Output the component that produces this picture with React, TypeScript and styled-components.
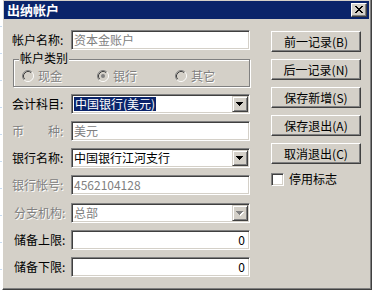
import styled, { createGlobalStyle } from "styled-components"

const colors = {
    face: "#d4d0c8",
    shadow: "#808080",
    darkShadow: "#404040",
    light: "#ffffff",
    navy: "#0a246a",
    text: "#000000",
    grayText: "#808080",
}

const GlobalStyle = createGlobalStyle`
html, body {
  margin: 0;
  padding: 0;
}
body {
  width: 372px;
  height: 290px;
  overflow: hidden;
  background: repeating-linear-gradient(to bottom, #ffffff 0 26px, #c9dcf0 26px 27px);
  font-family: "Noto Sans CJK SC", "Liberation Sans", sans-serif;
  font-size: 12px;
}
`

const Window = styled.div`
box-sizing: border-box;
width: 370px;
height: 291px;
margin: -1px 0 0 2px;
padding: 1px 2px 2px 1px;
background: ${colors.face};
border: 1px solid;
border-color: ${colors.light} ${colors.darkShadow} ${colors.darkShadow} ${colors.light};
box-shadow: inset -1px -1px ${colors.shadow};
display: flex;
flex-direction: column;
`

const TitleBar = styled.div`
height: 18px;
background: ${colors.navy};
display: flex;
align-items: center;
justify-content: space-between;
padding: 0 2px 0 3px;
`

const Title = styled.span`
color: #fff;
font-weight: bold;
font-size: 13px;
line-height: 14px;
`

const CloseButton = styled.div`
box-sizing: border-box;
width: 16px;
height: 14px;
background: ${colors.face};
border: 1px solid;
border-color: ${colors.light} ${colors.darkShadow} ${colors.darkShadow} ${colors.light};
box-shadow: inset -1px -1px ${colors.shadow};
display: flex;
align-items: center;
justify-content: center;
padding: 0 1px 1px 0;
`

const Content = styled.div`
display: flex;
padding: 11px 0 0 8px;
`

const LeftColumn = styled.div`
display: flex;
flex-direction: column;
width: 238px;
`

const Row = styled.div<{ $mt?: number }>`
display: grid;
grid-template-columns: 59px 179px;
align-items: center;
height: 20px;
margin-top: ${(p) => p.$mt ?? 7}px;
`

const Label = styled.span<{ $disabled?: boolean; $indent?: number }>`
color: ${(p) => (p.$disabled ? colors.grayText : colors.text)};
text-shadow: ${(p) => (p.$disabled ? `1px 1px ${colors.light}` : "none")};
padding-left: ${(p) => p.$indent ?? 0}px;
white-space: nowrap;
line-height: 16px;
`

const Field = styled.div<{ $gray?: boolean; $right?: boolean }>`
box-sizing: border-box;
height: 20px;
width: 179px;
background: #fff;
border: 1px solid;
border-color: ${colors.shadow} ${colors.light} ${colors.light} ${colors.shadow};
box-shadow: inset 1px 1px ${colors.darkShadow}, inset -1px -1px ${colors.face};
display: flex;
align-items: center;
justify-content: ${(p) => (p.$right ? "flex-end" : "space-between")};
padding: 0 ${(p) => (p.$right ? 4 : 1)}px 0 2px;
color: ${(p) => (p.$gray ? colors.grayText : colors.text)};
line-height: 16px;
white-space: nowrap;
`

const Selected = styled.span`
background: ${colors.navy};
color: #fff;
padding: 0 1px;
line-height: 14px;
`

const DropButton = styled.div<{ $disabled?: boolean }>`
box-sizing: border-box;
width: 16px;
height: 16px;
flex: none;
background: ${colors.face};
border: 1px solid;
border-color: ${colors.face} ${colors.darkShadow} ${colors.darkShadow} ${colors.face};
box-shadow: inset 1px 1px ${colors.light}, inset -1px -1px ${colors.shadow};
display: flex;
align-items: center;
justify-content: center;
`

const GroupBox = styled.div`
position: relative;
box-sizing: border-box;
width: 237px;
height: 28px;
margin: 9px 0 0 1px;
border: 1px solid ${colors.shadow};
box-shadow: inset 1px 1px ${colors.light}, 1px 1px ${colors.light};
display: grid;
grid-template-columns: 75px 78px 1fr;
align-items: center;
padding: 5px 0 0 8px;
`

const Legend = styled.span`
position: absolute;
top: -8px;
left: 5px;
padding: 0 1px;
background: ${colors.face};
color: ${colors.text};
line-height: 12px;
`

const RadioItem = styled.div`
display: flex;
align-items: center;
gap: 4px;
color: ${colors.grayText};
text-shadow: 1px 1px ${colors.light};
line-height: 12px;
`

const RightColumn = styled.div`
display: flex;
flex-direction: column;
gap: 7px;
margin-left: 21px;
padding-top: 1px;
`

const Button = styled.div`
box-sizing: border-box;
width: 90px;
height: 21px;
background: ${colors.face};
border: 1px solid;
border-color: ${colors.light} ${colors.darkShadow} ${colors.darkShadow} ${colors.light};
box-shadow: inset -1px -1px ${colors.shadow};
display: flex;
align-items: center;
justify-content: center;
color: ${colors.text};
line-height: 14px;
white-space: nowrap;
`

const CheckRow = styled.div`
display: flex;
align-items: center;
gap: 5px;
margin-top: 1px;
line-height: 14px;
`

const CheckBox = styled.div`
box-sizing: border-box;
width: 13px;
height: 13px;
background: #fff;
border: 1px solid;
border-color: ${colors.shadow} ${colors.light} ${colors.light} ${colors.shadow};
box-shadow: inset 1px 1px ${colors.darkShadow}, inset -1px -1px ${colors.face};
`

const CloseGlyph = () => {
    const rows = ["xx....xx", ".xx..xx.", "..xxxx..", "...xx...", "..xxxx..", ".xx..xx.", "xx....xx"]
    return (
        <svg width="8" height="7" viewBox="0 0 8 7" shapeRendering="crispEdges">
            {rows.flatMap((r, y) =>
                r.split("").map((c, x) => (c === "x" ? <rect key={`${x}-${y}`} x={x} y={y} width="1" height="1" fill="#000" /> : null))
            )}
        </svg>
    )
}

const Arrow = ({ disabled }: { disabled?: boolean }) => {
    const d = "M0 0h7v1h-1v1h-1v1h-1v1h-1v-1h-1v-1h-1v-1h-1z"
    return (
        <svg width="8" height="5" viewBox="0 0 8 5" shapeRendering="crispEdges">
            {disabled && <path d={d} fill="#fff" transform="translate(1 1)" />}
            <path d={d} fill={disabled ? colors.grayText : "#000"} />
        </svg>
    )
}

const Radio = ({ checked }: { checked?: boolean }) => (
    <svg width="12" height="12" viewBox="0 0 12 12">
        <circle cx="6" cy="6" r="4.5" fill={colors.face} />
        <path d="M2.11 9.89 A5.5 5.5 0 0 1 9.89 2.11" stroke={colors.shadow} fill="none" />
        <path d="M9.89 2.11 A5.5 5.5 0 0 1 2.11 9.89" stroke={colors.light} fill="none" />
        <path d="M2.82 9.18 A4.5 4.5 0 0 1 9.18 2.82" stroke={colors.darkShadow} fill="none" />
        <path d="M9.18 2.82 A4.5 4.5 0 0 1 2.82 9.18" stroke={colors.face} fill="none" />
        {checked && <circle cx="6" cy="6" r="2" fill={colors.grayText} />}
    </svg>
)

export default function App() {
    return (
        <>
            <GlobalStyle />
            <Window>
                <TitleBar>
                    <Title>出纳帐户</Title>
                    <CloseButton>
                        <CloseGlyph />
                    </CloseButton>
                </TitleBar>
                <Content>
                    <LeftColumn>
                        <Row $mt={0}>
                            <Label>帐户名称:</Label>
                            <Field $gray>资本金账户</Field>
                        </Row>
                        <GroupBox>
                            <Legend>帐户类别</Legend>
                            <RadioItem>
                                <Radio />
                                现金
                            </RadioItem>
                            <RadioItem>
                                <Radio checked />
                                银行
                            </RadioItem>
                            <RadioItem>
                                <Radio />
                                其它
                            </RadioItem>
                        </GroupBox>
                        <Row>
                            <Label>会计科目:</Label>
                            <Field>
                                <Selected>中国银行(美元)</Selected>
                                <DropButton>
                                    <Arrow />
                                </DropButton>
                            </Field>
                        </Row>
                        <Row>
                            <Label $disabled>币{"\u3000\u3000"}种:</Label>
                            <Field $gray>美元</Field>
                        </Row>
                        <Row>
                            <Label>银行名称:</Label>
                            <Field>
                                <span>中国银行江河支行</span>
                                <DropButton>
                                    <Arrow />
                                </DropButton>
                            </Field>
                        </Row>
                        <Row>
                            <Label $disabled>银行帐号:</Label>
                            <Field $gray>4562104128</Field>
                        </Row>
                        <Row $mt={8}>
                            <Label $disabled $indent={2}>分支机构:</Label>
                            <Field $gray>
                                <span>总部</span>
                                <DropButton $disabled>
                                    <Arrow disabled />
                                </DropButton>
                            </Field>
                        </Row>
                        <Row>
                            <Label $indent={2}>储备上限:</Label>
                            <Field $right>0</Field>
                        </Row>
                        <Row>
                            <Label $indent={2}>储备下限:</Label>
                            <Field $right>0</Field>
                        </Row>
                    </LeftColumn>
                    <RightColumn>
                        <Button>前一记录(B)</Button>
                        <Button>后一记录(N)</Button>
                        <Button>保存新增(S)</Button>
                        <Button>保存退出(A)</Button>
                        <Button>取消退出(C)</Button>
                        <CheckRow>
                            <CheckBox />
                            停用标志
                        </CheckRow>
                    </RightColumn>
                </Content>
            </Window>
        </>
    )
}
